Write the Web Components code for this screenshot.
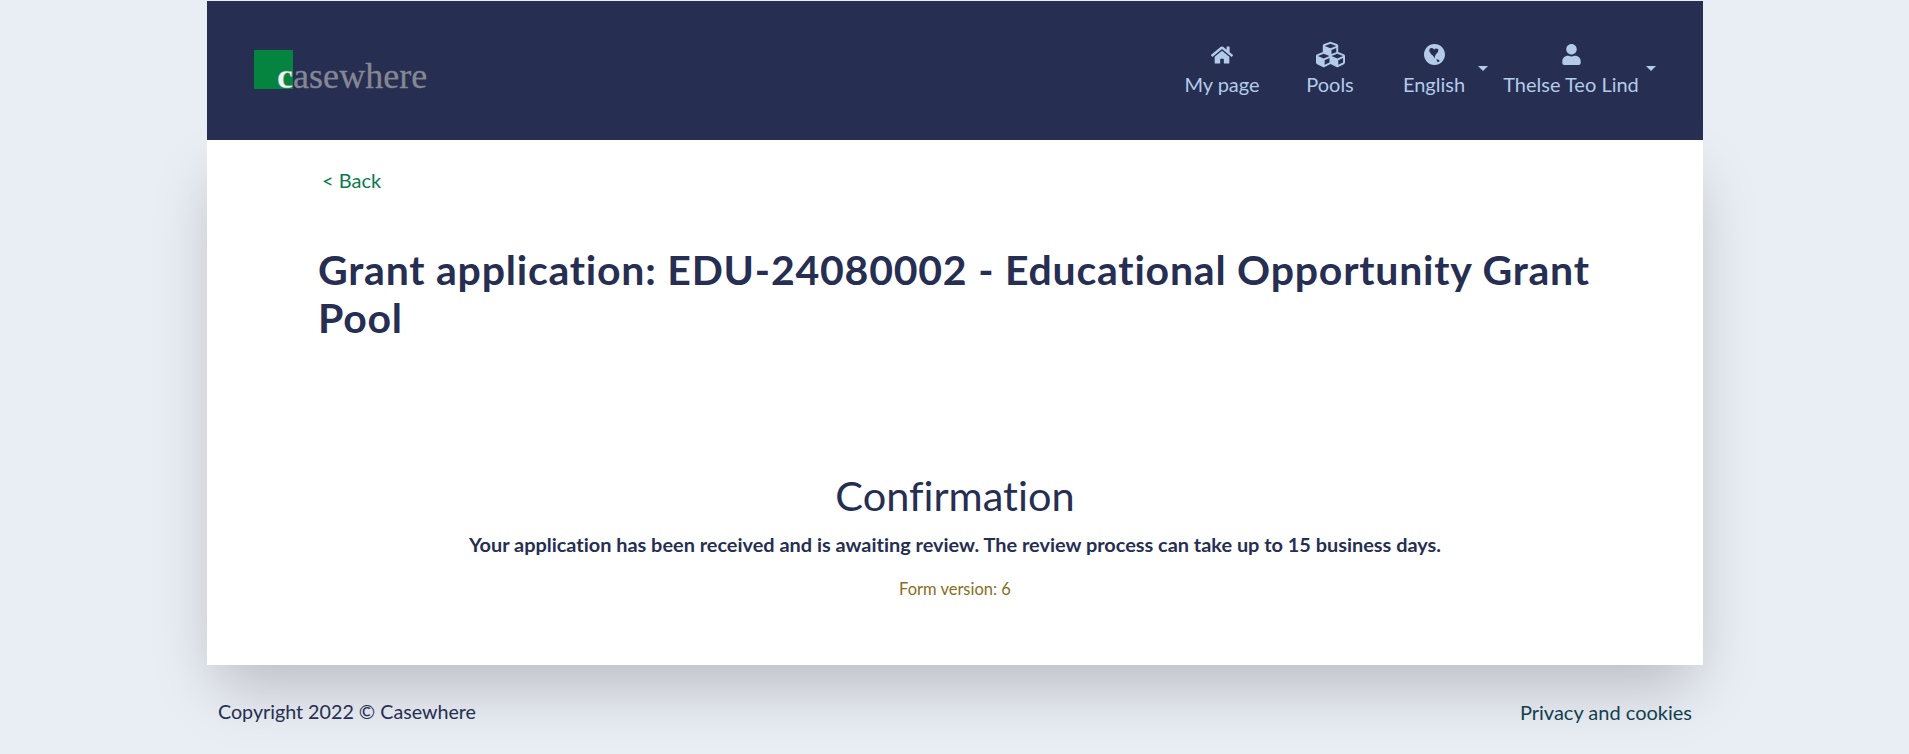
<!DOCTYPE html>
<html>
<head>
<meta charset="utf-8">
<style>
  html, body { margin: 0; height: 100%; }
  body { background: #e9edf4; overflow: hidden; }
</style>
</head>
<body>
<app-shell>
  <site-header></site-header>
  <page-content>
    <span slot="title">Grant application: EDU-24080002 - Educational Opportunity Grant Pool</span>
  </page-content>
  <site-footer></site-footer>
</app-shell>
<script>
const font = `Lato, "Noto Sans", sans-serif`;

class AppShell extends HTMLElement {
  constructor() {
    super();
    this.attachShadow({ mode: 'open' }).innerHTML = `
    <style>
      :host { display: block; width: 1496px; margin: 1px 0 0 207px; font-family: ${font}; font-variant-ligatures: none; }
    </style>
    <slot></slot>`;
  }
}

class NavItem extends HTMLElement {
  constructor() {
    super();
    this.attachShadow({ mode: 'open' }).innerHTML = `
    <style>
      :host { display: flex; flex-direction: column; align-items: center; position: relative; color: #b3cbe9; font-size: 20px; height: 62px; }
      .icon { height: 25px; display: flex; align-items: center; margin-bottom: 5px; }
      ::slotted(svg) { fill: #b3cbe9; display: block; }
      .caret { display: none; position: absolute; top: 24px; right: var(--caret-right, 0); border: 5px solid transparent; border-top-color: #b3cbe9; border-bottom: 0; }
      :host([caret]) .caret { display: block; }
    </style>
    <div class="icon"><slot name="icon"></slot></div>
    <span><slot></slot></span>
    <i class="caret"></i>`;
  }
}

class SiteHeader extends HTMLElement {
  constructor() {
    super();
    this.attachShadow({ mode: 'open' }).innerHTML = `
    <style>
      :host { display: flex; position: relative; z-index: 1; height: 139px; background: #262e52; justify-content: space-between; padding: 0 51px 0 47px; box-sizing: border-box; }
      .logo { position: relative; width: 175px; height: 39px; margin-top: 49px; background: linear-gradient(#05843f, #05843f) 0 0 / 39px 39px no-repeat; }
      .word { position: absolute; left: 23px; top: 4px; font: 36px/44px "Liberation Serif", serif; color: #858792; letter-spacing: .05px; white-space: nowrap; -webkit-text-stroke: .3px #858792; }
      .word b { color: #eef4f0; font-weight: 700; }
      nav { display: flex; padding-top: 41px; }
    </style>
    <div class="logo"><div class="word"><b>c</b>asewhere</div></div>
    <nav>
      <nav-item style="width:120px">
        <svg slot="icon" width="22" height="20" viewBox="0 0 576 512"><path d="M280.37 148.26L96 300.11V464a16 16 0 0 0 16 16l112.06-.29a16 16 0 0 0 15.92-16V368a16 16 0 0 1 16-16h64a16 16 0 0 1 16 16v95.64a16 16 0 0 0 16 16.05L464 480a16 16 0 0 0 16-16V300L295.67 148.26a12.19 12.19 0 0 0-15.3 0zM571.6 251.47L488 182.56V44.05a12 12 0 0 0-12-12h-56a12 12 0 0 0-12 12v72.61L318.47 43a48 48 0 0 0-61 0L4.34 251.47a12 12 0 0 0-1.6 16.9l25.5 31A12 12 0 0 0 45.15 301l235.22-193.74a12.19 12.19 0 0 1 15.3 0L530.9 301a12 12 0 0 0 16.9-1.6l25.5-31a12 12 0 0 0-1.7-16.93z"/></svg>
        My page</nav-item>
      <nav-item style="width:96px">
        <svg slot="icon" width="29" height="29" viewBox="0 0 512 512"><path d="M488.6 250.2L392 214V105.5c0-15-9.3-28.4-23.4-33.7l-100-37.5c-8.1-3.1-17.1-3.1-25.3 0l-100 37.5c-14.1 5.3-23.4 18.7-23.4 33.7V214l-96.6 36.2C9.3 255.5 0 268.9 0 283.9V394c0 13.6 7.7 26.1 19.9 32.2l100 50c10.1 5.1 22.1 5.1 32.2 0l103.9-52 103.9 52c10.1 5.1 22.1 5.1 32.2 0l100-50c12.2-6.1 19.9-18.6 19.9-32.2V283.9c0-15-9.3-28.4-23.4-33.7zM358 214.8l-85 31.9v-68.2l85-37v73.3zM154 104.1l102-38.2 102 38.2v.6l-102 41.4-102-41.4v-.6zm84 291.1l-85 42.5v-79.1l85-38.8v75.4zm0-112l-102 41.4-102-41.4v-.6l102-38.2 102 38.2v.6zm240 112l-85 42.5v-79.1l85-38.8v75.4zm0-112l-102 41.4-102-41.4v-.6l102-38.2 102 38.2v.6z"/></svg>
        Pools</nav-item>
      <nav-item caret style="width:112px;--caret-right:2.5px">
        <svg slot="icon" width="21" height="21" viewBox="0 0 496 496"><path fill-rule="evenodd" d="M248 0C111 0 0 111 0 248s111 248 248 248 248-111 248-248S385 0 248 0zM130 110l60-20 50 40 30-25 70 15-10 70-50 50-25 60-10 50-20-60-55-50-45-70zM290 360l60 10 20 40-50 20z"/></svg>
        English</nav-item>
      <nav-item caret style="width:162px;--caret-right:-3.5px">
        <svg slot="icon" width="19" height="21" viewBox="0 0 448 512"><path d="M224 256c70.7 0 128-57.3 128-128S294.7 0 224 0 96 57.3 96 128s57.3 128 128 128zm89.6 32h-16.7c-22.2 10.2-46.9 16-72.9 16s-50.6-5.8-72.9-16h-16.7C60.2 288 0 348.2 0 422.4V464c0 26.5 21.5 48 48 48h352c26.5 0 48-21.5 48-48v-41.6c0-74.2-60.2-134.4-134.4-134.4z"/></svg>
        Thelse Teo Lind</nav-item>
    </nav>`;
  }
}

class PageContent extends HTMLElement {
  constructor() {
    super();
    this.attachShadow({ mode: 'open' }).innerHTML = `
    <style>
      :host { display: block; height: 525px; padding: 0 90px 0 111px; box-sizing: border-box; background: #fff; color: #262e52; box-shadow: 0 30px 60px -10px rgba(0, 0, 0, .21); }
      .back { padding: 28px 0 0 4px; color: #0b7a50; font-size: 20px; line-height: 24px; }
      h1 { margin: 54px 0 0; font-size: 41px; letter-spacing: .78px; line-height: 48px; font-weight: 700; }
      .c { text-align: center; padding-right: 21px; }
      h2 { margin: 128px 0 0; font-weight: 400; font-size: 41.5px; line-height: 50px; }
      p { margin: 10px 0 0; font-weight: 700; font-size: 19.9px; line-height: 28px; }
      small { display: block; margin-top: 21px; color: #8a6d1c; font-size: 16.5px; line-height: 20px; }
    </style>
    <div class="back">&lt; Back</div>
    <h1><slot name="title"></slot></h1>
    <div class="c">
      <h2>Confirmation</h2>
      <p>Your application has been received and is awaiting review. The review process can take up to 15 business days.</p>
      <small>Form version: 6</small>
    </div>`;
  }
}

class SiteFooter extends HTMLElement {
  constructor() {
    super();
    this.attachShadow({ mode: 'open' }).innerHTML = `
    <style>
      :host { display: flex; justify-content: space-between; padding: 35px 11px 0; color: #262e52; font-size: 19.7px; line-height: 24px; }
      a { color: #123f4d; font-size: 20px; }
    </style>
    <span>Copyright 2022 © Casewhere</span><a>Privacy and cookies</a>`;
  }
}

customElements.define('app-shell', AppShell);
customElements.define('nav-item', NavItem);
customElements.define('site-header', SiteHeader);
customElements.define('page-content', PageContent);
customElements.define('site-footer', SiteFooter);
</script>
</body>
</html>
